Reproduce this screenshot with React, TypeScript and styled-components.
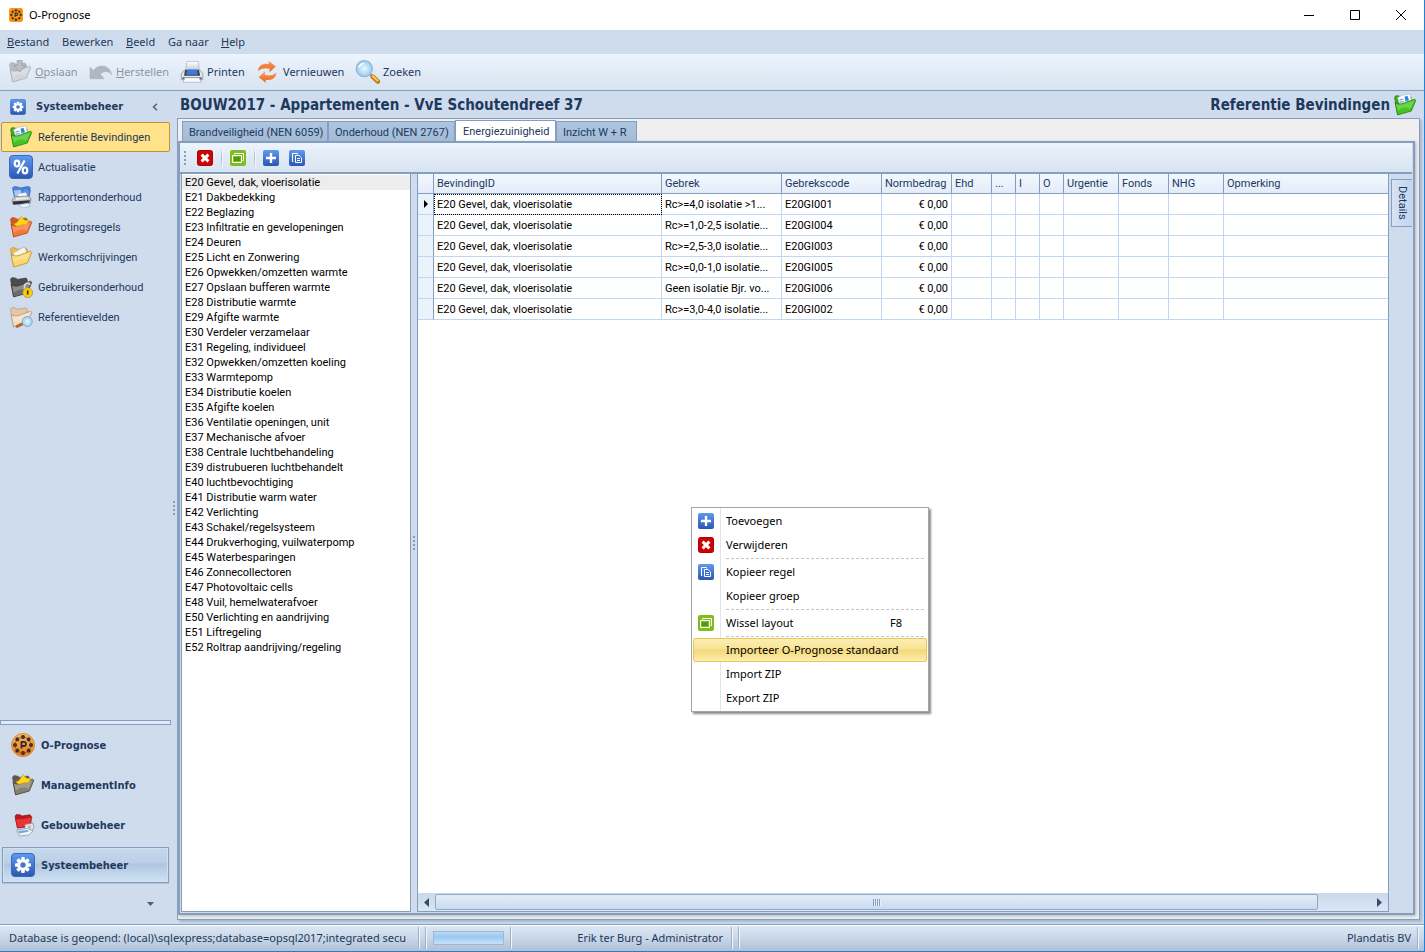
import React from 'react';
import styled, { createGlobalStyle, css } from 'styled-components';

const ui = '"Noto Sans", "Open Sans", sans-serif';
const dense = 'Roboto, "Liberation Sans", sans-serif';
const heavy = '"DejaVu Sans Condensed", "DejaVu Sans", sans-serif';
const ink = '#1e395b';
const line = '#859ebf';
const face = '#cfdcee';
const cellLine = '#c0d6f5';

const GlobalStyle = createGlobalStyle`
  *, *::before, *::after { box-sizing: border-box; }
  body { margin: 0; font-family: ${dense}; font-size: 11px; color: ${ink}; }
  button { font: inherit; color: inherit; border: 0; margin: 0; padding: 0; background: none; text-align: left; }
  ul { list-style: none; margin: 0; padding: 0; }
  svg { display: block; flex: none; }
`;

/* ---------- window ---------- */
const Window = styled.div`
  position: relative;
  display: flex;
  flex-direction: column;
  height: 100vh;
  min-height: 840px;
  background: ${face};
  border-right: 1px solid #1c84d8;
  border-bottom: 1px solid #2a7fc4;
`;
const TitleBar = styled.header`
  display: flex;
  align-items: center;
  height: 30px;
  padding-left: 9px;
  gap: 6px;
  background: #fff;
  color: #000;
  font: 11px/16px ${ui};
`;
const Caption = styled.h1`
  flex: 1;
  margin: 0;
  font: inherit;
`;
const CaptionButtons = styled.div`
  display: flex;
`;
const CaptionButton = styled.button`
  display: grid;
  place-items: center;
  width: 46px;
  height: 30px;
`;
const MenuBar = styled.nav`
  display: grid;
  grid-template-columns: 55px 64px 42px 53px 40px;
  align-items: center;
  height: 24px;
  padding-left: 7px;
  font: 11px/16px ${ui};
  white-space: nowrap;
`;
const MainTools = styled.div`
  display: grid;
  grid-template-columns: 81px 91px 76px 99px 80px;
  align-items: center;
  height: 37px;
  padding-left: 8px;
  background: linear-gradient(#edf4fd, #e2ecf7 45%, #d8e4f1);
  border-bottom: 1px solid ${line};
`;
const ToolButton = styled.button`
  display: flex;
  align-items: center;
  gap: 3px;
  font: 11px/16px ${ui};
  white-space: nowrap;
  &:disabled { color: #8b95a2; }
`;
const Body = styled.div`
  flex: 1;
  display: flex;
  min-height: 0;
`;

/* ---------- navigation ---------- */
const Sidebar = styled.aside`
  flex: 0 0 177px;
  display: grid;
  grid-template-columns: 171px 6px;
`;
const NavPane = styled.div`
  display: flex;
  flex-direction: column;
`;
const NavHeader = styled.div`
  display: flex;
  align-items: center;
  height: 31px;
  padding: 0 13px 0 10px;
  gap: 10px;
  h2 { flex: 1; margin: 0; font: bold 11px/16px ${heavy}; }
`;
const NavItem = styled.button<{ $on?: boolean }>`
  display: flex;
  align-items: center;
  gap: 5px;
  width: 169px;
  height: 30px;
  margin-left: 1px;
  padding-left: 7px;
  border: 1px solid ${p => (p.$on ? '#c29038' : 'transparent')};
  border-radius: 2px;
  background: ${p => (p.$on ? '#ffe28a' : 'transparent')};
`;
const NavSplit = styled.div`
  height: 5px;
  margin-top: auto;
  border: 1px solid ${line};
  background: #deeafa;
`;
const GroupList = styled.div`
  display: flex;
  flex-direction: column;
  gap: 4px;
  padding: 2px 2px 0;
`;
const GroupButton = styled.button<{ $on?: boolean }>`
  display: flex;
  align-items: center;
  gap: 6px;
  height: 36px;
  padding-left: 8px;
  font: bold 11px/16px ${heavy};
  border: 1px solid transparent;
  span { padding-top: 1px; }
  ${p => p.$on && css`
    border-color: ${line};
    background: linear-gradient(#c6d8ec, #bacfe6 45%, #afc5e0 46%, #cfe2f4);
    box-shadow: inset 0 0 0 1px #cfe0f1, 0 1px 1px #b4c3d8;
  `}
`;
const NavMore = styled.button`
  align-self: flex-end;
  display: grid;
  place-items: center;
  width: 41px;
  height: 41px;
`;
const Gripper = styled.div`
  align-self: center;
  justify-self: center;
  width: 2px;
  height: 14px;
  background: repeating-linear-gradient(${line} 0 2px, transparent 2px 4px);
`;

/* ---------- work area ---------- */
const Work = styled.main`
  flex: 1;
  min-width: 0;
  display: flex;
  flex-direction: column;
  padding: 0 4px 4px 0;
`;
const Heading = styled.div`
  display: flex;
  justify-content: space-between;
  align-items: center;
  height: 27px;
  padding: 0 3px;
  white-space: nowrap;
  h2, h3 { margin: 0; font: bold 15px/20px ${heavy}; }
`;
const PageName = styled.div`
  display: flex;
  align-items: center;
  gap: 3px;
`;
const Frame = styled.section`
  flex: 1;
  min-height: 0;
  display: flex;
  flex-direction: column;
  padding: 1px 4px 4px 0;
  border: 1px solid ${line};
  background: #efefef;
  box-shadow: 2px 2px 2px #a9b8cd;
`;
const TabStrip = styled.div`
  display: flex;
  align-items: flex-end;
  height: 21px;
  padding-left: 4px;
`;
const Tab = styled.button<{ $on?: boolean; $w: number }>`
  width: ${p => p.$w}px;
  height: ${p => (p.$on ? 22 : 20)}px;
  margin-bottom: ${p => (p.$on ? -1 : 0)}px;
  padding: ${p => (p.$on ? '0 0 0 7px' : '2px 0 0 6px')};
  white-space: nowrap;
  border: 1px solid ${line};
  border-bottom: 0;
  background: ${p => (p.$on ? '#fff' : 'linear-gradient(#adc5e0, #a2bbd7)')};
`;
const TabPage = styled.div`
  flex: 1;
  min-height: 0;
  display: flex;
  flex-direction: column;
  border: 2px solid ${line};
  padding: 0 1px 1px 1px;
  background: ${face};
  box-shadow: 1px 1px 3px #b5b5b5;
`;
const PageTools = styled.div`
  display: flex;
  align-items: center;
  gap: 8px;
  height: 31px;
  margin-left: -1px;
  padding-left: 4px;
  background: linear-gradient(#edf4fd, #e2ecf7 45%, #d8e4f1);
  border-bottom: 2px solid ${line};
`;
const IconGroup = styled.div`
  display: flex;
  align-items: center;
  gap: 8px;
  padding-left: 2px;
`;
const IconButton = styled.button`
  width: 18px;
  height: 18px;
  padding: 1px;
`;
const Divider = styled.span`
  width: 1px;
  height: 18px;
  margin-left: -1px;
  margin-right: -1px;
  background: linear-gradient(#dbe6f3, #aebfd5 40%, #aebfd5 60%, #dbe6f3);
  box-shadow: 1px 0 #f3f8fe;
`;
const Panes = styled.div`
  flex: 1;
  min-height: 0;
  display: grid;
  grid-template-columns: 230px 6px minmax(0, 1fr) 23px;
`;
const GroupsBox = styled.ul`
  padding-top: 1px;
  background: #fff;
  border: 1px solid ${line};
  border-top: 0;
  color: #000;
  overflow: hidden;
`;
const GroupRow = styled.li<{ $on?: boolean }>`
  height: 15px;
  padding-left: 3px;
  line-height: 15px;
  white-space: nowrap;
  background: ${p => (p.$on ? '#ededed' : 'none')};
`;
const GridBox = styled.div`
  display: flex;
  flex-direction: column;
  border: 1px solid ${line};
  border-top: 0;
  background: #fff;
`;
const Grid = styled.table`
  width: 100%;
  table-layout: fixed;
  border-collapse: separate;
  border-spacing: 0;
  th, td {
    height: 21px;
    padding: 0 3px;
    font-weight: normal;
    text-align: left;
    white-space: nowrap;
    overflow: hidden;
    text-overflow: ellipsis;
    border-right: 1px solid ${cellLine};
    border-bottom: 1px solid ${cellLine};
  }
  th { height: 20px; border-color: ${line}; background: linear-gradient(#f3f8fe, #e2ecf9); }
  td { color: #000; }
  tr > :last-child { border-right: 0; }
  tbody tr > :first-child { padding: 0; border-right-color: ${line}; background: #eaf2fc; }
`;
const Cell = styled.td<{ $focus?: boolean; $right?: boolean }>`
  && { text-align: ${p => (p.$right ? 'right' : 'left')}; }
  ${p => p.$focus && css`outline: 1px dotted #000; outline-offset: -1px;`}
`;
const ScrollBar = styled.div`
  display: grid;
  grid-template-columns: 17px minmax(0, 1fr) 70px;
  height: 18px;
  margin-top: auto;
  padding: 1px 0;
  background: linear-gradient(#c9d8ea, #dbe7f5);
`;
const ScrollArrow = styled.button<{ $end?: boolean }>`
  display: flex;
  align-items: center;
  justify-content: ${p => (p.$end ? 'flex-end' : 'flex-start')};
  padding: 0 6px;
`;
const Thumb = styled.div`
  display: grid;
  place-items: center;
  border: 1px solid #8fa9cc;
  border-radius: 2px;
  background: linear-gradient(#e2ecf7, #cbdbef);
  span { width: 8px; height: 7px; background: repeating-linear-gradient(90deg, ${line} 0 1px, #e7f0fa 1px 2px); }
`;
const DockStrip = styled.div`
  padding: 5px 0 0 2px;
`;
const DockTab = styled.button`
  width: 21px;
  height: 48px;
  padding-top: 6px;
  writing-mode: vertical-rl;
  line-height: 18px;
  border: 1px solid ${line};
  border-right: 0;
  background: linear-gradient(90deg, #d6e3f4, #c0d5ef);
`;

/* ---------- status bar ---------- */
const StatusBar = styled.footer`
  display: flex;
  align-items: center;
  height: 27px;
  padding: 0 0 0 9px;
  border-top: 1px solid ${line};
  box-shadow: inset 0 1px #fff;
  background: linear-gradient(#dce8f6, #cbd9e9 45%, #b0c1d6);
  font: 11px/16px ${ui};
  white-space: nowrap;
`;
const StatusText = styled.span<{ $w?: number; $right?: boolean }>`
  flex: ${p => (p.$w ? `0 0 ${p.$w}px` : '1')};
  padding-right: 8px;
  text-align: ${p => (p.$right ? 'right' : 'left')};
`;
const StatusRule = styled.span`
  width: 2px;
  height: 22px;
  margin-right: 5px;
  background: linear-gradient(90deg, #9fb1ca 50%, #f2f7fd 50%);
`;
const Progress = styled.div`
  width: 71px;
  height: 14px;
  margin: 0 6px 0 1px;
  border: 1px solid #a3b5d2;
  background: linear-gradient(#b9dbf7, #9cc8ef 40%, #c3e2fb);
`;
const Owner = styled.span`
  padding-right: 6px;
`;

/* ---------- context menu ---------- */
const Popup = styled.div`
  position: absolute;
  left: 691px;
  top: 507px;
  width: 238px;
  padding: 1px;
  color: #000;
  border: 1px solid #a3a7ad;
  background: linear-gradient(90deg, #fff 28px, #e2e4e7 28px 29px, #fff 29px);
  box-shadow: 2px 2px 2px #8b8b8b;
`;
const PopupItem = styled.button<{ $on?: boolean }>`
  display: grid;
  grid-template-columns: 28px 164px 1fr;
  align-items: center;
  width: 100%;
  height: 24px;
  padding-left: 4px;
  font: 11px/16px ${ui};
  white-space: nowrap;
  border: 1px solid transparent;
  ${p => p.$on && css`
    border-color: #eac65c;
    border-radius: 2px;
    background: linear-gradient(#fbeeb4, #f9e495 45%, #f4d878 50%, #fbeeb0);
  `}
`;
const PopupRule = styled.div`
  height: 3px;
  padding: 1px 3px 1px 33px;
  &::before {
    content: '';
    display: block;
    height: 1px;
    background: repeating-linear-gradient(90deg, #c5c5c5 0 3px, transparent 3px 5px);
  }
`;

/* ---------- icons ---------- */
const HiddenSvg = styled.svg`
  position: absolute;
`;
const Defs = () => (
  <HiddenSvg width="0" height="0" aria-hidden="true">
    <defs>
      <linearGradient id="blue" x2="0" y2="1"><stop stopColor="#609aee" /><stop offset="1" stopColor="#2a56b2" /></linearGradient>
      <linearGradient id="orange" x2="0" y2="1"><stop stopColor="#fbb65a" /><stop offset="1" stopColor="#ef7d16" /></linearGradient>
      <linearGradient id="arrow" x2="0" y2="1"><stop stopColor="#f99a5c" /><stop offset="1" stopColor="#ec6418" /></linearGradient>
      <linearGradient id="paper" x2="0" y2="1"><stop stopColor="#fff" /><stop offset="1" stopColor="#c3c8cf" /></linearGradient>
      <radialGradient id="lens"><stop stopColor="#e9f8ff" /><stop offset="1" stopColor="#97cdf0" /></radialGradient>
    </defs>
  </HiddenSvg>
);

const Gear = ({ size }: { size: number }) => (
  <svg width={size} height={size} viewBox="0 0 24 24">
    <rect x=".5" y=".5" width="23" height="23" rx="3.5" fill="url(#blue)" stroke="#3a69bf" />
    <g fill="#fff">
      {[0, 45, 90, 135].map(a => <rect key={a} x="10.2" y="4" width="3.6" height="16" rx="1" transform={`rotate(${a} 12 12)`} />)}
      <circle cx="12" cy="12" r="5.8" />
    </g>
    <circle cx="12" cy="12" r="2.7" fill="#4377d0" />
  </svg>
);

const Percent = () => (
  <svg width="24" height="24" viewBox="0 0 24 24">
    <rect x=".5" y=".5" width="23" height="23" rx="3.5" fill="url(#blue)" stroke="#3a69bf" />
    <g fill="none" stroke="#fff" strokeWidth="2.2">
      <ellipse cx="8" cy="8.6" rx="2.3" ry="2.9" />
      <ellipse cx="16" cy="15.4" rx="2.3" ry="2.9" />
      <path d="M15.6 5.5 8.4 18.5" />
    </g>
  </svg>
);

const Seal = ({ size, square }: { size: number; square?: boolean }) => (
  <svg width={size} height={size} viewBox="0 0 24 24">
    {square ? <rect width="24" height="24" rx="4" fill="#fb9410" /> : <circle cx="12" cy="12" r="11.5" fill="url(#orange)" stroke="#d98a3c" />}
    {[0, 45, 90, 135, 180, 225, 270, 315].map(a => (
      <circle key={a} cx="12" cy="4" r="2" fill="#2c2a33" transform={`rotate(${a} 12 12)`} />
    ))}
    <circle cx="12" cy="12" r="8" fill="none" stroke="#6b4a2e" strokeWidth=".7" />
    <path d="M10.5 15.6V8.8h2.3a2.1 2.1 0 0 1 0 4.2h-2.3" fill="none" stroke="#2c2a33" strokeWidth="1.8" />
  </svg>
);

type Extra = 'pages' | 'star' | 'paper' | 'lock' | 'lens' | 'down';
const Folder = ({ back, front, edge, extra }: { back: string; front: string; edge: string; extra?: Extra }) => (
  <svg width="24" height="24" viewBox="0 0 24 24">
    <g transform="translate(0 -2) scale(1 1.14)">
      <path d="M1.5 5.5 3 4l4 .6 1.3 1L17 4.4l1.2 1.4.3 11L4.6 20.5z" fill={back} stroke={edge} strokeWidth=".6" />
      {extra === 'pages' && <g><path d="m4.5 6 4-2 8.500-1.500 3 11-11 4z" fill="#fff" stroke="#a7b9bd" strokeWidth=".6" /><path d="m11.500 5 3-.8 1.500 4-3.500 1z" fill="#2f86e0" /><path d="m6.500 8 4-1m-3.600 3 4-1" stroke="#6ea4d4" /></g>}
      {extra === 'paper' && <path d="M4 8c4 .4 6-3.500 12-4.500l2.500 8-12 6z" fill="#f3f3f0" stroke="#b3b0a5" strokeWidth=".6" />}
      <path d="M4.600 21 2 9.700c2.500 2 6 2 9.300.7L21.600 7.200l1.200 1-4.500 9.400z" fill={front} stroke={edge} strokeWidth=".7" strokeLinejoin="round" />
      <path d="M3.200 11.300c3.400 1.400 6.400.9 9-.3l9-2.800-3.700 7.600c-3.200-2.300-8.400-1.600-12.800 1.600z" fill="#fff" opacity=".22" />
      {extra === 'star' && <path d="m4.800 9.800 3.500-1.600L12 3l3.400 3.300 4.800.5-3 3.200-4 .4-5.200 1.300z" fill="#ffd718" stroke="#dba50c" strokeWidth=".6" />}
      {extra === 'down' && <path d="M9.200 2.300h5v4.200h3.700l-6.200 5.800-6.200-5.800h3.700z" fill="#b9bec4" stroke="#949aa1" strokeWidth=".7" />}
    </g>
    {extra === 'lock' && <g><path d="M15.600 14V11a2.800 2.800 0 0 1 5.400-1" fill="none" stroke="#d6d6d6" strokeWidth="1.700" /><circle cx="18.700" cy="17.700" r="4.900" fill="#f6cf14" stroke="#b58f08" strokeWidth=".7" /><path d="M18.700 15.300v4.300" stroke="#3d3410" strokeWidth="1.700" /></g>}
    {extra === 'lens' && <g><path d="m7 21.800 8-3.600" stroke="#b8672f" strokeWidth="3" /><circle cx="18.300" cy="16.500" r="5" fill="url(#lens)" stroke="#88aec6" /></g>}
  </svg>
);
const GreenFolder = () => <Folder back="#3fa823" front="#44c41f" edge="#237c10" extra="pages" />;

const ReportFolder = () => (
  <svg width="24" height="24" viewBox="0 0 24 24">
    <path d="M3.500 3 5 1.500l4 .5 2 1 8-1.500 2.200 1L20 11 5.500 12.500z" fill="#4b84dc" stroke="#2f5fae" strokeWidth=".7" />
    <path d="m5 5.500 7-.500 1 6-7 1z" fill="#a9c9f5" />
    <path d="m13 6 4-3.500L19 5l2.500.5L20 11.500 14 11z" fill="#5b93ea" stroke="#2f5fae" strokeWidth=".6" />
    <path d="m8 9 9-1.500 1.500 4L10 13z" fill="#fbfcfe" stroke="#a5afbb" strokeWidth=".5" />
    <path d="m3 15 3-3.500 14.500-.5 1.500 3-.8 4.500L4 19.500z" fill="#c4c6c9" stroke="#6f7378" strokeWidth=".6" />
    <path d="m7 13 11.500-.8.5 1.800-12 1z" fill="#ececee" />
    <path d="m3.500 16.500 17.500-1.300-1 3.300-15.500 1z" fill="#303338" />
    <path d="m9 20 10-2 2.500 3.300-7 1.700z" fill="#e6f0fa" stroke="#8fabc8" strokeWidth=".6" />
  </svg>
);
const BuildingFolder = () => (
  <svg width="24" height="24" viewBox="0 0 24 24">
    <path d="M4 3 5.500 1.500l4 .5 1.500 1L19 1.800l1.200 1.400-.5 10L6.500 15z" fill="#c3161c" stroke="#8e1217" strokeWidth=".7" />
    <path d="M6.500 15 4.500 6l7-.5L21 4l-2.500 9z" fill="#ea3439" stroke="#a0151a" strokeWidth=".6" />
    <path d="m14 11.500 8-1.500 1 4.500-1.500 2.500-7.500.5z" fill="#e3e5e8" stroke="#85898e" strokeWidth=".7" />
    <circle cx="18.500" cy="14" r="1.700" fill="#b5bac0" />
    <path d="m5.500 17 11-1.500L22 18l-4 4-9.500 1z" fill="#f0f3f6" stroke="#8b9299" strokeWidth=".7" />
    <path d="m7 18 9.500-1 1.500 1.500-9.500 2z" fill="#68addf" />
  </svg>
);

const Undo = () => (
  <svg width="24" height="24" viewBox="0 0 24 24">
    <path d="M1 18.700V7.400l3.500 3C10 3.600 20.600 4.800 22.700 14.800c-3-3.700-7.600-4.600-11.400-.6l3.600 4.500z" fill="#b0b7bf" stroke="#a4abb3" strokeWidth=".5" />
  </svg>
);
const Printer = () => (
  <svg width="24" height="24" viewBox="0 0 25 24">
    <path d="M7 1h12l1.300 10H5.800z" fill="url(#paper)" stroke="#aeb5be" strokeWidth=".7" />
    <path d="m4.800 9.800-3.400 3.800V20h22.400v-6.400l-3.400-3.800z" fill="#e2e5e9" stroke="#8d949d" strokeWidth=".8" />
    <path d="M5.300 10h14.500l1.200 6H4.200z" fill="#3c4148" />
    <path d="M7.200 9.500h10.600l.6 5.300H6.600z" fill="#3c7ade" />
    <path d="M2.500 17.500h20.200v2H2.500z" fill="#5d646d" />
    <path d="m5 18 15 0 2 4.700H3.300z" fill="#f9fafc" stroke="#a0a8b0" strokeWidth=".7" />
  </svg>
);
const Refresh = () => (
  <svg width="24" height="24" viewBox="0 0 24 24">
    <path d="M2 11.200C2.400 5.400 7 3 12.800 4V1l7 5.600-6.200 5.600V8.800C9 7.700 5 8.400 2 11.200z" fill="url(#arrow)" />
    <path d="M20.500 12.600c-.4 5.800-5 8.200-10.800 7.200v3l-7-5.600 6.200-5.600V15c4.600 1.100 8.600.4 11.600-2.400z" fill="url(#arrow)" />
  </svg>
);
const Search = () => (
  <svg width="25" height="24" viewBox="0 0 25 24">
    <path d="m15.500 14.500 2.500 2.300" stroke="#8b9197" strokeWidth="2.500" />
    <path d="m17.800 16.600 4.900 4.700" stroke="#b56e12" strokeWidth="4.600" strokeLinecap="round" />
    <path d="m17.800 16.200 4.600 4.500" stroke="#fbc54c" strokeWidth="2.500" strokeLinecap="round" />
    <circle cx="9.300" cy="8.700" r="8" fill="url(#lens)" stroke="#90b7d0" strokeWidth="1.300" />
    <path d="M4 7.500a6 6 0 0 1 5-4" fill="none" stroke="#fff" strokeWidth="1.600" />
  </svg>
);

const Plus = () => (
  <svg width="16" height="16" viewBox="0 0 16 16"><rect width="16" height="16" rx="2" fill="url(#blue)" /><path d="M8 3v10M3 8h10" stroke="#fff" strokeWidth="2.400" /></svg>
);
const Cross = () => (
  <svg width="16" height="16" viewBox="0 0 16 16"><rect x=".5" y=".5" width="15" height="15" rx="2" fill="#cc0404" stroke="#b00000" /><path d="m4.600 4.600 6.800 6.800m0-6.800-6.800 6.800" stroke="#fff" strokeWidth="2.900" /></svg>
);
const Copy = () => (
  <svg width="16" height="16" viewBox="0 0 16 16">
    <rect width="16" height="16" rx="2" fill="url(#blue)" />
    <path d="M4.500 11.500h-1v-8h5v1" fill="none" stroke="#fff" />
    <path d="M6.500 12.500v-7h3.500l2.500 2.400v4.600z" fill="#3a6cc8" stroke="#fff" />
    <path d="M8 8.500h3m-3 2h3" stroke="#fff" />
  </svg>
);
const Windows = () => (
  <svg width="16" height="16" viewBox="0 0 16 16">
    <rect width="16" height="16" rx="2" fill="#80bb20" />
    <path d="M4.500 4.500v-1h9v7h-1" fill="none" stroke="#fff" />
    <path d="M2.500 5.500h9v7h-9z" fill="#80bb20" stroke="#fff" />
    <path d="M4 7h6v4H4z" fill="#4f9a10" />
  </svg>
);

/* ---------- data ---------- */
const navItems: [string, React.ReactNode][] = [
  ['Referentie Bevindingen', <GreenFolder />],
  ['Actualisatie', <Percent />],
  ['Rapportenonderhoud', <ReportFolder />],
  ['Begrotingsregels', <Folder back="#d8581c" front="#f5783a" edge="#a8441a" extra="star" />],
  ['Werkomschrijvingen', <Folder back="#eebb45" front="#fbd76a" edge="#b98a28" extra="paper" />],
  ['Gebruikersonderhoud', <Folder back="#4c4c4c" front="#6c6c6c" edge="#333" extra="lock" />],
  ['Referentievelden', <Folder back="#e6c6a6" front="#f1dcc4" edge="#af9077" extra="lens" />],
];
const groupItems: [string, React.ReactNode][] = [
  ['O-Prognose', <Seal size={24} />],
  ['ManagementInfo', <Folder back="#5d5b55" front="#85806f" edge="#45423a" extra="star" />],
  ['Gebouwbeheer', <BuildingFolder />],
  ['Systeembeheer', <Gear size={24} />],
];
const groups = [
  'E20 Gevel, dak, vloerisolatie', 'E21 Dakbedekking', 'E22 Beglazing', 'E23 Infiltratie en gevelopeningen',
  'E24 Deuren', 'E25 Licht en Zonwering', 'E26 Opwekken/omzetten warmte', 'E27 Opslaan bufferen warmte',
  'E28 Distributie warmte', 'E29 Afgifte warmte', 'E30 Verdeler verzamelaar', 'E31 Regeling, individueel',
  'E32 Opwekken/omzetten koeling', 'E33 Warmtepomp', 'E34 Distributie koelen', 'E35 Afgifte koelen',
  'E36 Ventilatie openingen, unit', 'E37 Mechanische afvoer', 'E38 Centrale luchtbehandeling',
  'E39 distrubueren luchtbehandelt', 'E40 luchtbevochtiging', 'E41 Distributie warm water', 'E42 Verlichting',
  'E43 Schakel/regelsysteem', 'E44 Drukverhoging, vuilwaterpomp', 'E45 Waterbesparingen', 'E46 Zonnecollectoren',
  'E47 Photovoltaic cells', 'E48 Vuil, hemelwaterafvoer', 'E50 Verlichting en aandrijving', 'E51 Liftregeling',
  'E52 Roltrap aandrijving/regeling',
];
const columns: [string, number?][] = [
  ['', 16], ['BevindingID', 228], ['Gebrek', 120], ['Gebrekscode', 100], ['Normbedrag', 70], ['Ehd', 40],
  ['...', 24], ['I', 24], ['O', 24], ['Urgentie', 55], ['Fonds', 50], ['NHG', 55], ['Opmerking'],
];
const rows = [
  ['Rc>=4,0 isolatie >1...', 'E20GI001'],
  ['Rc>=1,0-2,5 isolatie...', 'E20GI004'],
  ['Rc>=2,5-3,0 isolatie...', 'E20GI003'],
  ['Rc>=0,0-1,0 isolatie...', 'E20GI005'],
  ['Geen isolatie Bjr. vo...', 'E20GI006'],
  ['Rc>=3,0-4,0 isolatie...', 'E20GI002'],
];
const tabs: [string, number][] = [
  ['Brandveiligheid (NEN 6059)', 146], ['Onderhoud (NEN 2767)', 127], ['Energiezuinigheid', 101], ['Inzicht W + R', 81],
];
const popup: ([string, React.ReactNode?, string?] | null)[] = [
  ['Toevoegen', <Plus />], ['Verwijderen', <Cross />], null,
  ['Kopieer regel', <Copy />], ['Kopieer groep'], null,
  ['Wissel layout', <Windows />, 'F8'], null,
  ['Importeer O-Prognose standaard'], ['Import ZIP'], ['Export ZIP'],
];

export default function App() {
  return (
    <Window>
      <GlobalStyle />
      <Defs />
      <TitleBar>
        <Seal size={14} square />
        <Caption>O-Prognose</Caption>
        <CaptionButtons>
          <CaptionButton aria-label="Minimaliseren"><svg width="10" height="10"><path d="M0 5.5h10" stroke="#000" /></svg></CaptionButton>
          <CaptionButton aria-label="Maximaliseren"><svg width="10" height="10"><path d="M.5.5h9v9h-9z" fill="none" stroke="#000" /></svg></CaptionButton>
          <CaptionButton aria-label="Sluiten"><svg width="10" height="10"><path d="m0 0 10 10m0-10L0 10" stroke="#000" /></svg></CaptionButton>
        </CaptionButtons>
      </TitleBar>
      <MenuBar>
        <button><u>B</u>estand</button>
        <button>Bewerken</button>
        <button><u>B</u>eeld</button>
        <button>Ga naar</button>
        <button><u>H</u>elp</button>
      </MenuBar>
      <MainTools>
        <ToolButton disabled><Folder back="#b9bdc2" front="#d2d5d9" edge="#a6abb1" extra="down" /><span><u>O</u>pslaan</span></ToolButton>
        <ToolButton disabled><Undo /><span><u>H</u>erstellen</span></ToolButton>
        <ToolButton><Printer />Printen</ToolButton>
        <ToolButton><Refresh />Vernieuwen</ToolButton>
        <ToolButton><Search />Zoeken</ToolButton>
      </MainTools>

      <Body>
        <Sidebar>
          <NavPane>
            <NavHeader>
              <Gear size={16} />
              <h2>Systeembeheer</h2>
              <svg width="6" height="8"><path d="M5 .8 1.5 4 5 7.2" fill="none" stroke="#4c5f7e" strokeWidth="1.5" /></svg>
            </NavHeader>
            {navItems.map(([label, icon], i) => <NavItem key={label} $on={i === 0}>{icon}{label}</NavItem>)}
            <NavSplit />
            <GroupList>
              {groupItems.map(([label, icon], i) => <GroupButton key={label} $on={i === 3}>{icon}<span>{label}</span></GroupButton>)}
            </GroupList>
            <NavMore aria-label="Meer"><svg width="7" height="4"><path d="M0 0h7L3.5 4z" fill="#4c5f7e" /></svg></NavMore>
          </NavPane>
          <Gripper />
        </Sidebar>

        <Work>
          <Heading>
            <h2>BOUW2017 - Appartementen - VvE Schoutendreef 37</h2>
            <PageName><h3>Referentie Bevindingen</h3><GreenFolder /></PageName>
          </Heading>
          <Frame>
            <TabStrip role="tablist">
              {tabs.map(([label, w], i) => <Tab key={label} role="tab" $w={w} $on={i === 2}>{label}</Tab>)}
            </TabStrip>
            <TabPage>
              <PageTools>
                <Gripper />
                <IconGroup>
                  <IconButton aria-label="Verwijderen"><Cross /></IconButton>
                  <Divider />
                  <IconButton aria-label="Wissel layout"><Windows /></IconButton>
                  <Divider />
                  <IconButton aria-label="Toevoegen"><Plus /></IconButton>
                  <IconButton aria-label="Kopieer regel"><Copy /></IconButton>
                </IconGroup>
              </PageTools>
              <Panes>
                <GroupsBox role="listbox">
                  {groups.map((g, i) => <GroupRow key={g} role="option" aria-selected={i === 0} $on={i === 0}>{g}</GroupRow>)}
                </GroupsBox>
                <Gripper />
                <GridBox>
                  <Grid>
                    <colgroup>{columns.map(([name, w]) => <col key={name} width={w} />)}</colgroup>
                    <thead><tr>{columns.map(([name]) => <th key={name}>{name}</th>)}</tr></thead>
                    <tbody>
                      {rows.map(([defect, code], i) => (
                        <tr key={code}>
                          <td>{i === 0 && <svg width="12" height="8"><path d="M6 0v8l4-4z" fill="#000" /></svg>}</td>
                          <Cell $focus={i === 0}>E20 Gevel, dak, vloerisolatie</Cell>
                          <td>{defect}</td>
                          <td>{code}</td>
                          <Cell $right>€ 0,00</Cell>
                          {columns.slice(5).map(([name]) => <td key={name} />)}
                        </tr>
                      ))}
                    </tbody>
                  </Grid>
                  <ScrollBar>
                    <ScrollArrow aria-label="Links"><svg width="5" height="9"><path d="M5 0v9L0 4.5z" fill="#3d4a6b" /></svg></ScrollArrow>
                    <Thumb><span /></Thumb>
                    <ScrollArrow $end aria-label="Rechts"><svg width="5" height="9"><path d="M0 0v9l5-4.5z" fill="#3d4a6b" /></svg></ScrollArrow>
                  </ScrollBar>
                </GridBox>
                <DockStrip><DockTab>Details</DockTab></DockStrip>
              </Panes>
            </TabPage>
          </Frame>
        </Work>
      </Body>

      <StatusBar>
        <StatusText $w={409}>Database is geopend: (local)\sqlexpress;database=opsql2017;integrated secu</StatusText>
        <StatusRule /><StatusRule />
        <Progress role="progressbar" aria-label="Voortgang" />
        <StatusRule />
        <StatusText $w={214} $right>Erik ter Burg - Administrator</StatusText>
        <StatusRule /><StatusRule />
        <StatusText />
        <Owner>Plandatis BV</Owner>
        <StatusRule />
      </StatusBar>

      <Popup role="menu">
        {popup.map((item, i) => item
          ? <PopupItem key={i} role="menuitem" $on={i === 8}><span>{item[1]}</span><span>{item[0]}</span><span>{item[2]}</span></PopupItem>
          : <PopupRule key={i} role="separator" />)}
      </Popup>
    </Window>
  );
}
